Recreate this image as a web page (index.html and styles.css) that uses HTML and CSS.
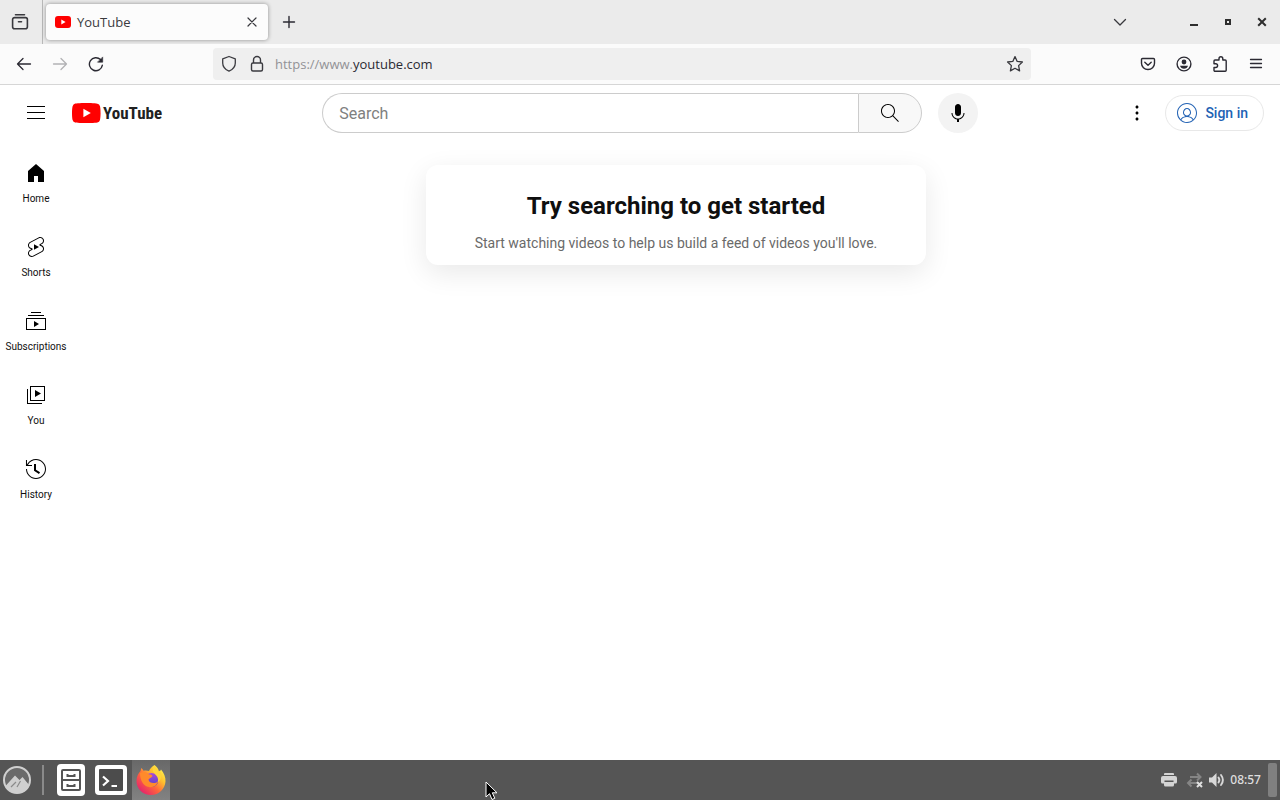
FILE: index.html
```html
<!DOCTYPE html>
<html lang="en">

<head>
  <meta charset="UTF-8">
  <meta name="viewport" content="width=device-width, initial-scale=1.0">
  <title>YouTube</title>
  <link rel="stylesheet" href="styles.css">
</head>

<body>
  <!-- browser tabs -->
  <div class="tab-bar">
    <button class="tab-view" aria-label="Recent browsing">
      <svg width="18" height="18" viewBox="0 0 18 18" fill="none" stroke="#38383d" stroke-width="1.6" stroke-linecap="round">
        <path d="M4.500 1.700h9M3.600 4.600h10.800a2 2 0 0 1 2 2v7.200a2 2 0 0 1-2 2H3.600a2 2 0 0 1-2-2V6.600a2 2 0 0 1 2-2zM7.500 8.800h3"/>
      </svg>
    </button>
    <div class="tab">
      <svg width="16" height="12" viewBox="0 0 16 12"><rect width="16" height="12" rx="3" fill="#f00"/><path d="M6.3 3.4v5.2L10.6 6z" fill="#fff"/></svg>
      <span class="tab-title">YouTube</span>
      <button class="tab-close" aria-label="Close tab">
        <svg width="10" height="10" viewBox="0 0 10 10" stroke="#38383d" stroke-width="1.2" stroke-linecap="round"><path d="M1 1l8 8M9 1l-8 8"/></svg>
      </button>
    </div>
    <button class="tool-btn" aria-label="New tab">
      <svg width="14" height="14" viewBox="0 0 14 14" stroke="#2b2a33" stroke-width="1.4" stroke-linecap="round"><path d="M7 1.5v11M1.5 7h11"/></svg>
    </button>
    <div class="window-controls">
      <button class="list-tabs" aria-label="List all tabs">
        <svg width="14" height="14" viewBox="0 0 14 14" fill="none" stroke="#38383d" stroke-width="1.3" stroke-linecap="round" stroke-linejoin="round"><path d="M1.5 4.5L7 10l5.500-5.500"/></svg>
      </button>
      <button class="win-btn" aria-label="Minimize">
        <svg width="10" height="10" viewBox="0 0 10 10"><path d="M1 7h8v2H1z" fill="#2e2e2e"/></svg>
      </button>
      <button class="win-btn" aria-label="Maximize">
        <svg width="10" height="10" viewBox="0 0 10 10"><path d="M3 3h4v4H3z" fill="none" stroke="#2e2e2e" stroke-width="2"/></svg>
      </button>
      <button class="win-btn" aria-label="Close window">
        <svg width="10" height="10" viewBox="0 0 10 10" stroke="#2e2e2e" stroke-width="2"><path d="M1.200 1.200l7.600 7.600M8.800 1.200L1.200 8.800"/></svg>
      </button>
    </div>
  </div>

  <!-- navigation toolbar -->
  <div class="nav-bar">
    <button class="tool-btn" aria-label="Back">
      <svg width="16" height="16" viewBox="0 0 16 16" fill="none" stroke="#2b2a33" stroke-width="1.300" stroke-linecap="round" stroke-linejoin="round"><path d="M14.500 8H1.500M7 2.500L1.500 8L7 13.500"/></svg>
    </button>
    <button class="tool-btn" aria-label="Forward" disabled>
      <svg width="16" height="16" viewBox="0 0 16 16" fill="none" stroke="#b2b2b5" stroke-width="1.300" stroke-linecap="round" stroke-linejoin="round"><path d="M1.500 8h13M9 2.500L14.500 8L9 13.500"/></svg>
    </button>
    <button class="tool-btn" aria-label="Reload">
      <svg width="16" height="16" viewBox="0 0 16 16" fill="none" stroke="#2b2a33" stroke-width="1.400" stroke-linecap="round"><path d="M14.300 9.300A6.500 6.500 0 1 1 12.500 3.600"/><path d="M14.700 1.300v4.900H9.800z" fill="#2b2a33" stroke-width=".6" stroke-linejoin="round"/></svg>
    </button>
    <div class="url-bar">
      <svg width="16" height="18" viewBox="0 0 16 18" fill="none" stroke="#3b3b40" stroke-width="1.300" stroke-linejoin="round"><path d="M8 1.500L14.300 3.900V8c0 3.800-2.500 6.500-6.300 8.200C4.200 14.500 1.700 11.800 1.700 8V3.900z"/></svg>
      <svg width="16" height="18" viewBox="0 0 16 18" fill="none" stroke="#3b3b40" stroke-width="1.400"><rect x="2.500" y="8" width="11" height="8" rx="1.500"/><path d="M4.500 8V5a3.500 3.500 0 0 1 7 0v3"/></svg>
      <a class="url" href="#">https://www.<span class="url-host">youtube.com</span></a>
      <button class="star-btn" aria-label="Bookmark this page">
        <svg width="18" height="18" viewBox="0 0 18 18" fill="none" stroke="#38383d" stroke-width="1.300" stroke-linejoin="round"><path d="M9 1.600l2.200 4.800 5.200.6-3.800 3.600 1 5.300L9 13.300l-4.600 2.600 1-5.300L1.600 7l5.200-.6z"/></svg>
      </button>
    </div>
    <button class="tool-btn" aria-label="Save to Pocket">
      <svg width="16" height="16" viewBox="0 0 16 16" fill="none" stroke="#2b2a33" stroke-width="1.400" stroke-linecap="round" stroke-linejoin="round"><path d="M2.500 2.500h11a1 1 0 0 1 1 1v3.700a6.500 6.300 0 0 1-13 0V3.500a1 1 0 0 1 1-1z"/><path d="M4.800 6.300L8 9.300l3.200-3"/></svg>
    </button>
    <button class="tool-btn" aria-label="Account">
      <svg width="16" height="16" viewBox="0 0 16 16"><circle cx="8" cy="8" r="6.900" fill="none" stroke="#2b2a33" stroke-width="1.400"/><circle cx="8" cy="6" r="2.400" fill="#2b2a33"/><path d="M4 9.800h8c-.5 2-2 3-4 3s-3.500-1-4-3z" fill="#2b2a33"/></svg>
    </button>
    <button class="tool-btn" aria-label="Extensions">
      <svg width="16" height="18" viewBox="0 0 16 18" fill="none" stroke="#2b2a33" stroke-width="1.400" stroke-linejoin="round"><path d="M7 5V3.700a1.900 1.900 0 0 1 3.800 0V5h2.400a1 1 0 0 1 1 1v9.300a1 1 0 0 1-1 1H3a1 1 0 0 1-1-1v-2.800h1.700a1.900 1.900 0 0 0 0-3.800H2V6a1 1 0 0 1 1-1z"/></svg>
    </button>
    <button class="tool-btn" aria-label="Application menu">
      <svg width="14" height="14" viewBox="0 0 14 14" stroke="#2b2a33" stroke-width="1.300" stroke-linecap="round"><path d="M1.500 2.500h11M1.500 6.500h11M1.500 10.500h11"/></svg>
    </button>
  </div>

  <!-- page header -->
  <header class="masthead">
    <div class="masthead-start">
      <button class="icon-btn" aria-label="Guide">
        <svg width="24" height="24" viewBox="0 0 24 24"><path d="M21 6H3V5h18v1zm0 5H3v1h18v-1zm0 6H3v1h18v-1z"/></svg>
      </button>
      <a class="logo" href="#">
        <svg width="29" height="20" viewBox="0 0 29 20"><path d="M28 3.200A3.600 3.600 0 0 0 25.400.7C23 0 14.300 0 14.300 0S5.500 0 3.200.6A3.600 3.600 0 0 0 .6 3.200C0 5.400 0 10 0 10s0 4.600.6 6.900a3.600 3.600 0 0 0 2.600 2.500c2.300.6 11.100.6 11.100.6s8.800 0 11.100-.6a3.600 3.600 0 0 0 2.600-2.500c.6-2.300.6-6.900.6-6.900s0-4.600-.6-6.800z" fill="#f00"/><path d="M11.400 14.300L18.800 10l-7.400-4.300z" fill="#fff"/></svg>
        <span class="logo-text">YouTube</span>
      </a>
    </div>
    <div class="masthead-center">
      <form class="search-form">
        <input class="search-input" type="text" placeholder="Search" aria-label="Search">
        <button class="search-btn" type="button" aria-label="Search">
          <svg width="24" height="24" viewBox="0 0 24 24"><path d="M20.870 20.170l-5.590-5.590C16.350 13.350 17 11.750 17 10c0-3.870-3.130-7-7-7s-7 3.130-7 7 3.130 7 7 7c1.750 0 3.350-.65 4.580-1.710l5.590 5.590.7-.71zM10 16c-3.310 0-6-2.690-6-6s2.690-6 6-6 6 2.690 6 6-2.690 6-6 6z"/></svg>
        </button>
      </form>
      <button class="icon-btn mic-btn" aria-label="Search with your voice">
        <svg width="24" height="24" viewBox="0 0 24 24"><path d="M12 3c-1.660 0-3 1.370-3 3.070v5.860c0 1.700 1.340 3.070 3 3.070s3-1.370 3-3.070V6.070C15 4.370 13.660 3 12 3zm6.500 9h-1c0 3.030-2.470 5.500-5.500 5.500S6.500 15.030 6.500 12h-1c0 3.240 2.390 5.930 5.500 6.410V21h2v-2.590c3.110-.48 5.500-3.170 5.500-6.410z"/></svg>
      </button>
    </div>
    <div class="masthead-end">
      <button class="icon-btn" aria-label="Settings">
        <svg width="24" height="24" viewBox="0 0 24 24"><path d="M12 16.500c.83 0 1.500.67 1.500 1.500s-.67 1.500-1.500 1.500-1.500-.67-1.500-1.500.67-1.500 1.500-1.500zM10.500 12c0 .83.67 1.500 1.500 1.500s1.500-.67 1.500-1.500-.67-1.500-1.500-1.500-1.500.67-1.500 1.500zm0-6c0 .83.67 1.500 1.500 1.500s1.500-.67 1.500-1.500-.67-1.500-1.500-1.500-1.500.67-1.500 1.500z"/></svg>
      </button>
      <a class="sign-in" href="#">
        <svg width="24" height="24" viewBox="0 0 24 24" fill="currentColor"><path d="M12 2C6.480 2 2 6.480 2 12s4.480 10 10 10 10-4.480 10-10S17.520 2 12 2zM3 12c0-4.960 4.040-9 9-9s9 4.040 9 9c0 2.420-.97 4.620-2.530 6.240-.84-1.640-2.600-2.760-4.750-3.110C15.050 14.490 16 13.110 16 11.500 16 9.010 14.210 7 12 7s-4 2.010-4 4.500c0 1.610.95 2.990 2.280 3.630-2.150.35-3.910 1.470-4.750 3.110A8.960 8.960 0 0 1 3 12zm9 2.500c-1.650 0-3-1.350-3-3s1.350-3.500 3-3.500 3 1.850 3 3.500-1.350 3-3 3zm0 6.500c-2.160 0-4.130-.77-5.680-2.040C7.150 17.190 9.360 16 12 16s4.850 1.190 5.680 2.960A8.950 8.950 0 0 1 12 21z"/></svg>
        Sign in
      </a>
    </div>
  </header>

  <div class="page">
    <nav class="mini-guide">
      <a class="guide-item" href="#">
        <svg width="24" height="24" viewBox="0 0 24 24"><path d="M4 10v11h6v-6h4v6h6V10l-8-7z"/></svg>
        Home
      </a>
      <a class="guide-item" href="#">
        <svg width="24" height="24" viewBox="0 0 24 24"><path d="M10 14.650v-5.300L15 12l-5 2.650zm7.770-4.330l-1.200-.5L18 9.060c1.840-.96 2.530-3.230 1.560-5.060s-3.240-2.530-5.070-1.560L6 6.940c-1.290.68-2.070 2.040-2 3.490.07 1.420.93 2.670 2.220 3.250.03.010 1.200.5 1.200.5L6 14.930c-1.830.97-2.530 3.240-1.560 5.070.97 1.830 3.240 2.530 5.070 1.560l8.500-4.500c1.290-.68 2.060-2.040 1.990-3.490-.07-1.420-.94-2.680-2.230-3.250zm-.23 5.860l-8.500 4.500c-1.340.71-3.010.2-3.720-1.140-.71-1.340-.2-3.010 1.140-3.720l2.040-1.080v-1.210l-.69-.28-1.110-.46c-.99-.41-1.650-1.350-1.700-2.410-.05-1.060.52-2.060 1.460-2.560l8.500-4.500c1.340-.71 3.010-.2 3.720 1.140.71 1.340.2 3.010-1.140 3.720L15.500 9.260v1.210l1.800.74c.99.41 1.650 1.350 1.700 2.410.05 1.060-.52 2.060-1.460 2.560z"/></svg>
        Shorts
      </a>
      <a class="guide-item" href="#">
        <svg width="24" height="24" viewBox="0 0 24 24"><path d="M10 18v-6l5 3-5 3zm7-15H7v1h10V3zm3 3H4v1h16V6zm2 3H2v12h20V9zM3 10h18v10H3V10z"/></svg>
        Subscriptions
      </a>
      <a class="guide-item" href="#">
        <svg width="24" height="24" viewBox="0 0 24 24"><path d="M11 7l6 3.500-6 3.500V7zm7 13H4V6H3v15h15v-1zm3-2H6V3h15v15zM7 17h13V4H7v13z"/></svg>
        You
      </a>
      <a class="guide-item" href="#">
        <svg width="24" height="24" viewBox="0 0 24 24"><path d="M14.970 16.950L10 13.870V7h2v5.760l4.030 2.490-1.060 1.700zM22 12c0 5.510-4.490 10-10 10S2 17.510 2 12h1c0 4.960 4.040 9 9 9s9-4.040 9-9-4.040-9-9-9C8.810 3 5.920 4.640 4.280 7.380c-.11.18-.22.370-.31.560L3.940 8H8v1H1.960V3h1v4.740c.04-.09.070-.17.110-.25.110-.22.230-.42.350-.63C5.220 3.860 8.510 2 12 2c5.510 0 10 4.490 10 10z"/></svg>
        History
      </a>
    </nav>
    <main class="content">
      <div class="nudge">
        <h1 class="nudge-title">Try searching to get started</h1>
        <p class="nudge-text">Start watching videos to help us build a feed of videos you'll love.</p>
      </div>
    </main>
  </div>

  <!-- desktop panel -->
  <footer class="panel">
    <button class="menu-btn" aria-label="Menu">
      <svg width="30" height="30" viewBox="0 0 30 30"><circle cx="15" cy="15" r="13" fill="#6a6a6a" stroke="#cfcfcf" stroke-width="2"/><path d="M3.500 21L13 10.500l4.500 4.500L20.500 12l7 8.500A13.500 13.500 0 0 1 3.500 21z" fill="#cfcfcf"/><path d="M9 22l5-5M15 22l3.500-6" stroke="#8a8a8a" stroke-width="1.200"/></svg>
    </button>
    <span class="panel-separator"></span>
    <button class="launcher" aria-label="Files">
      <svg width="30" height="32" viewBox="0 0 30 32"><rect x="1" width="28" height="32" rx="4" fill="#fff"/><g fill="none" stroke="#555" stroke-width="2"><rect x="6" y="6" width="18" height="20" rx="1"/><path d="M6 16h18M11.500 10v2h7v-2M11.500 20v2h7v-2"/></g></svg>
    </button>
    <button class="launcher" aria-label="Terminal">
      <svg width="32" height="30" viewBox="0 0 32 30"><rect width="32" height="30" rx="4" fill="#fff"/><rect x="4" y="4" width="24" height="22" rx="1" fill="#4c4c4c"/><path d="M8 11.500l5 4.500-5 4.500M16.500 21H22" fill="none" stroke="#fff" stroke-width="2.200"/></svg>
    </button>
    <button class="launcher launcher-active" aria-label="Firefox">
      <svg width="32" height="32" viewBox="0 0 32 32">
        <defs>
          <linearGradient id="flame" x1="0.9" y1="0.1" x2="0.15" y2="0.9">
            <stop offset="0" stop-color="#fff44f"/>
            <stop offset=".3" stop-color="#ffc02e"/>
            <stop offset=".6" stop-color="#ff663b"/>
            <stop offset="1" stop-color="#e5236d"/>
          </linearGradient>
          <linearGradient id="globe" x1="0" y1="0" x2="0" y2="1">
            <stop offset="0" stop-color="#a94ad8"/>
            <stop offset="1" stop-color="#4f42c8"/>
          </linearGradient>
        </defs>
        <path d="M19.500 1c2.500 2 4 4 4.500 6.500 1-.3 1.600-1 2-2 3 3.500 4.800 7.500 4.500 12C30 25 24 31 16 31S1.500 25 1.500 17c0-4.500 1.800-7.500 4-10l.8-3c1 .8 1.700 1.700 2.200 2.700 2-.5 3.700-.3 5.500.3C15 4.500 17 2.500 19.500 1z" fill="url(#flame)"/>
        <circle cx="16.500" cy="16" r="7" fill="url(#globe)"/>
        <path d="M19 2c-2 3-1.500 5.500 1 8s4 5 2.500 8.500c4-2 5-8 2-12-.5 1-1 1.500-1.800 1.500C22.500 5.500 21 3.500 19 2z" fill="#ffd43a"/>
        <path d="M5 9c3-1.800 7-1.300 9 1.500 1.500 0 3 .3 3.500 1.500-.5 1.500-3 1.800-4 3.500.3 3.500 6 5 9.500 2-1 4-5 6.500-9 5.500C8 22 5 16 5 9z" fill="#ff8a2b"/>
      </svg>
    </button>
    <div class="tray">
      <svg class="printer" width="18" height="18" viewBox="0 0 18 18" fill="#d4d4d4"><path d="M5 2h8a1 1 0 0 1 1 1v1H4V3a1 1 0 0 1 1-1zM3 5h12a2 2 0 0 1 2 2v4a1.500 1.500 0 0 1-1.500 1.500H14V14a1.500 1.500 0 0 1-1.500 1.500h-7A1.500 1.500 0 0 1 4 14v-1.500H2.500A1.500 1.500 0 0 1 1 11V7a2 2 0 0 1 2-2z"/><path d="M4.500 9.500h9V11h-9z" fill="#555"/></svg>
      <svg width="18" height="18" viewBox="0 0 18 18" fill="none" stroke="#858585" stroke-width="2"><path d="M4 6h10M11 2.500L14.500 6L11 9.500M13 12H2M5.500 8.500L2 12l3.500 3.500"/><path d="M11 11l5 5M16 11l-5 5" stroke="#e0e0e0"/></svg>
      <svg width="18" height="18" viewBox="0 0 18 18"><path d="M1 6.500h3L8.500 2v14L4 11.500H1z" fill="#d8d8d8"/><path d="M10.500 6.500q1.800 2.500 0 5M13 4q3.800 5 0 10" fill="none" stroke="#d8d8d8" stroke-width="1.900" stroke-linecap="round"/></svg>
      <span class="clock">08:57</span>
      <span class="show-desktop"></span>
    </div>
  </footer>

  <svg class="cursor" width="14" height="20" viewBox="0 0 14 20"><path d="M1 1v15l3.500-3.300L7 18.500l2.800-1.200-2.500-5.500H12z" fill="#000" stroke="#fff"/></svg>
</body>

</html>
```
FILE: styles.css
```css
* {
  box-sizing: border-box;
}

body {
  margin: 0;
  min-height: 100vh;
  display: flex;
  flex-direction: column;
  background-color: #fff;
  color: #0f0f0f;
  font-family: Roboto, Arial, sans-serif;
}

button {
  display: flex;
  align-items: center;
  justify-content: center;
  padding: 0;
  border: none;
  background: none;
  cursor: pointer;
}

a {
  color: inherit;
  text-decoration: none;
}

svg {
  display: block;
  flex-shrink: 0;
}

/* browser */
.tab-bar {
  display: flex;
  align-items: center;
  height: 44px;
  background-color: #ebebeb;
  font-family: "Open Sans", "Noto Sans", sans-serif;
}

.tab-view {
  width: 43px;
  height: 44px;
  padding-right: 2px;
  border-right: 1px solid #b8b8b8;
}

.tab {
  display: flex;
  align-items: center;
  gap: 6px;
  width: 222px;
  height: 36px;
  margin: 0 3px;
  padding: 0 6px 0 9px;
  background-color: #fcfcfc;
  border-radius: 4px;
  box-shadow: 0 0 4px rgba(0, 0, 0, 0.4);
}

.tab-title {
  flex: 1;
  font-size: 13px;
  color: #3a3a3e;
}

.tab-close {
  width: 20px;
  height: 20px;
}

.tool-btn {
  width: 36px;
  height: 32px;
}

.window-controls {
  display: flex;
  align-items: center;
  margin-left: auto;
  padding-right: 1px;
}

.list-tabs {
  width: 36px;
  height: 32px;
  margin-right: 39px;
}

.win-btn {
  width: 34px;
  height: 32px;
}

.nav-bar {
  display: flex;
  align-items: center;
  height: 41px;
  padding: 0 6px;
  background-color: #fbfbfb;
  border-bottom: 1px solid #d6d6d6;
}

.url-bar {
  display: flex;
  flex: 1;
  align-items: center;
  gap: 12px;
  height: 32px;
  margin: 0 99px;
  padding: 0 7px 0 8px;
  background-color: #efefef;
  border-radius: 4px;
}

.url {
  flex: 1;
  margin-left: -2px;
  font-family: "Open Sans", "Noto Sans", sans-serif;
  font-size: 13px;
  color: #929296;
}

.url-host {
  color: #2b2a33;
}

/* header */
.masthead {
  display: flex;
  align-items: center;
  justify-content: space-between;
  height: 56px;
  padding: 0 16px;
}

.masthead-start {
  display: flex;
  align-items: center;
  gap: 16px;
  width: 167px;
}

.icon-btn {
  width: 40px;
  height: 40px;
  border-radius: 50%;
}

.logo {
  display: flex;
  align-items: center;
  gap: 2px;
}

.logo-text {
  font-family: "Liberation Sans Narrow", "Roboto Condensed", Roboto, sans-serif;
  font-size: 17px;
  font-weight: bold;
  line-height: 20px;
  color: #212121;
}

.masthead-center {
  display: flex;
  flex: 0 1 656px;
  gap: 16px;
}

.search-form {
  display: flex;
  flex: 1;
}

.search-input {
  flex: 1;
  min-width: 0;
  height: 40px;
  padding: 0 16px;
  border: 1px solid #ccc;
  border-right: none;
  border-radius: 20px 0 0 20px;
  font-family: inherit;
  font-size: 16px;
}

.search-input::placeholder {
  color: #808080;
}

.search-btn {
  width: 64px;
  height: 40px;
  border: 1px solid #ccc;
  border-radius: 0 20px 20px 0;
  background-color: #f8f8f8;
}

.mic-btn {
  background-color: #f3f3f3;
}

.masthead-end {
  display: flex;
  align-items: center;
  gap: 8px;
}

.sign-in {
  display: flex;
  align-items: center;
  gap: 6px;
  height: 36px;
  padding: 0 15px 0 9px;
  border: 1px solid #e8e8e8;
  border-radius: 18px;
  font-size: 14px;
  font-weight: 500;
  color: #2262b4;
}

/* page */
.page {
  display: flex;
  flex: 1;
}

.mini-guide {
  width: 72px;
  padding-top: 4px;
}

.guide-item {
  display: flex;
  flex-direction: column;
  align-items: center;
  gap: 7px;
  padding: 16px 0 13px;
  font-size: 10px;
  line-height: 14px;
}

.content {
  flex: 1;
  padding-top: 24px;
}

.nudge {
  max-width: 500px;
  margin: 0 auto;
  padding: 25px 16px 12px;
  border-radius: 12px;
  background-color: #fff;
  box-shadow: 0 8px 28px rgba(0, 0, 0, 0.09);
  text-align: center;
}

.nudge-title {
  margin: 0 0 11px;
  font-size: 24px;
  font-weight: 700;
  line-height: 32px;
}

.nudge-text {
  margin: 0;
  font-size: 14px;
  line-height: 20px;
  color: #6a6a6a;
}

/* desktop panel */
.panel {
  display: flex;
  align-items: center;
  height: 40px;
  padding-left: 2px;
  background-color: #555;
}

.panel-separator {
  width: 2px;
  height: 30px;
  margin: 0 8px 0 10px;
  background-color: #8a8a8a;
}

.launcher {
  width: 38px;
  height: 40px;
  margin-right: 2px;
}

.launcher-active {
  background: linear-gradient(#686868, #828282);
}

.tray {
  display: flex;
  align-items: center;
  gap: 4px;
  margin-left: auto;
  padding-right: 3px;
}

.printer {
  margin-right: 4px;
}

.clock {
  font-family: "Noto Sans", sans-serif;
  font-size: 12px;
  font-weight: 500;
  line-height: 18px;
  color: #dedede;
}

.show-desktop {
  width: 9px;
  height: 34px;
  margin-left: 3px;
  border-radius: 2px;
  background-color: #808080;
}

.cursor {
  position: absolute;
  left: 485px;
  top: 781px;
}
```
